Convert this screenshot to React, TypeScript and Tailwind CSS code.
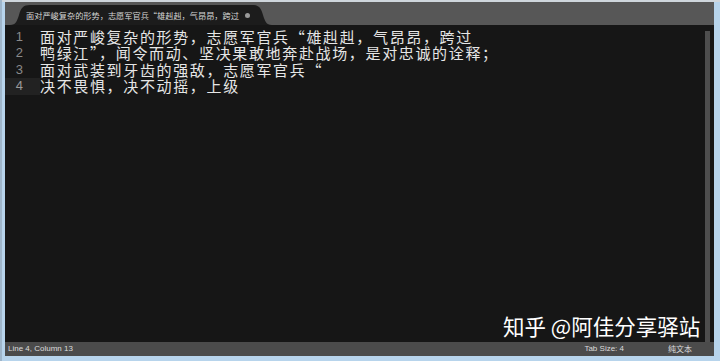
import React from "react";

const lines = [
  "面对严峻复杂的形势，志愿军官兵“雄赳赳，气昂昂，跨过",
  "鸭绿江”，闻令而动、坚决果敢地奔赴战场，是对忠诚的诠释；",
  "面对武装到牙齿的强敌，志愿军官兵“",
  "决不畏惧，决不动摇，上级",
];

const cjk = { fontFamily: '"Noto Sans CJK SC", "Noto Sans", sans-serif' };
const ui = { fontFamily: '"Liberation Sans", "Noto Sans CJK SC", sans-serif' };

export default function App() {
  return (
    <div className="relative w-[720px] h-[361px] overflow-hidden bg-[#b7d4ec] flex flex-col pl-[5px] pr-[6px] pb-[5px] pt-[2px]">
      <div className="absolute left-0 top-0 w-[720px] h-[2px] bg-[#cfd6dc]" />
      <div className="absolute left-0 top-0 w-[2px] h-[361px] bg-[#9fb6cb]" />
      {/* tab bar */}
      <div className="h-[23px] bg-[#575757] flex items-end pl-[5px] shrink-0">
        <div className="relative w-[262px] h-[20px] flex items-center pl-[16px]">
          <svg className="absolute inset-0" width="262" height="20" viewBox="0 0 262 20">
            <path d="M0 20 C6 20 7 16 9 10 C11 3 13 0 20 0 L242 0 C249 0 251 3 253 10 C255 16 256 20 262 20 Z" fill="#1c1c1c" />
          </svg>
          <span className="relative text-[8.2px] text-[#d6d6d6] whitespace-nowrap" style={cjk}>
            面对严峻复杂的形势，志愿军官兵“雄赳赳，气昂昂，跨过
          </span>
          <span className="relative ml-[6px] w-[5px] h-[5px] rounded-full bg-[#9a9a9a]" />
        </div>
      </div>
      {/* editor */}
      <div className="flex-1 bg-[#161616] flex min-h-0">
        <div className="w-[35px] pt-[4px] flex flex-col">
          {lines.map((_, i) => (
            <div
              key={i}
              className={`h-[16.4px] leading-[16.4px] text-[13px] text-right pr-[17px] ${i === 3 ? "bg-[#222222] text-[#9a9a9a]" : "text-[#8a8a8a]"}`}
              style={ui}
            >
              {i + 1}
            </div>
          ))}
        </div>
        <div className="flex-1 pt-[4px] flex flex-col">
          {lines.map((l, i) => (
            <div key={i} className="h-[16.4px] leading-[16.4px] text-[15px] tracking-[1.65px] text-[#e6e6e6] whitespace-nowrap" style={cjk}>
              {l}
            </div>
          ))}
        </div>
        <div className="w-[5px] mt-[6px] bg-[#4e4e4e]" />
        <div className="w-[4px]" />
      </div>
      {/* status bar */}
      <div className="h-[14px] bg-[#4b4b4b] flex items-center text-[8px] text-[#dcdcdc] shrink-0" style={ui}>
        <span className="pl-[3px]">Line 4, Column 13</span>
        <span className="ml-auto">Tab Size: 4</span>
        <span className="ml-[44px] mr-[22px]" style={cjk}>纯文本</span>
      </div>
      {/* watermark */}
      <div className="absolute left-[503px] top-[313px] text-[21.5px] leading-[26px] text-white whitespace-nowrap" style={cjk}>
        知乎 @阿佳分享驿站
      </div>
    </div>
  );
}
